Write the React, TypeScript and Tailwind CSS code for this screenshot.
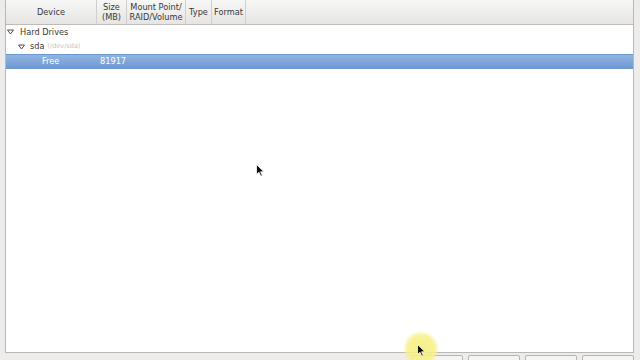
import React from "react";

const font = { fontFamily: '"DejaVu Sans", Verdana, sans-serif' };

function Arrow({ open = true }: { open?: boolean }) {
  return (
    <svg width="7" height="6" viewBox="0 0 7 6" className="shrink-0">
      {open ? (
        <path d="M0.5 1 L6.5 1 L3.5 5 Z" fill="none" stroke="#4a4a4a" strokeWidth="1" />
      ) : (
        <path d="M1 0.5 L5 3 L1 5.5 Z" fill="none" stroke="#4a4a4a" strokeWidth="1" />
      )}
    </svg>
  );
}

function Cursor({ className }: { className: string }) {
  return (
    <svg width="9" height="13" viewBox="0 0 9 13" className={className}>
      <path d="M0.5 0.5 L0.5 10.5 L3 8.3 L4.8 12.3 L6.3 11.6 L4.6 7.8 L8 7.8 Z" fill="#111" stroke="#fff" strokeWidth="0.8" />
    </svg>
  );
}

export default function App() {
  return (
    <div className="relative h-[360px] w-[640px] overflow-hidden bg-[#edeceb] text-[8.2px] text-[#383838]" style={font}>
      <div className="ml-[5px] flex h-[353px] w-[629px] flex-col border-b border-l border-r border-[#b9b8b6] bg-white">
        {/* header */}
        <div className="flex h-[25px] shrink-0 border-b border-[#bdbcba] bg-gradient-to-b from-[#f7f7f6] to-[#e6e5e4] leading-[10px]">
          <div className="flex w-[91px] items-center justify-center border-r border-[#d0cfcd]">Device</div>
          <div className="flex w-[30px] flex-col items-center justify-center border-r border-[#d0cfcd] text-center">
            <span>Size</span>
            <span>(MB)</span>
          </div>
          <div className="flex w-[59px] flex-col items-center justify-center border-r border-[#d0cfcd] text-center">
            <span>Mount Point/</span>
            <span>RAID/Volume</span>
          </div>
          <div className="flex w-[26px] items-center justify-center border-r border-[#d0cfcd]">Type</div>
          <div className="flex w-[34px] items-center justify-center border-r border-[#d0cfcd]">Format</div>
          <div className="flex-1" />
        </div>

        {/* rows */}
        <div className="flex h-[14px] items-center gap-[6px] pl-[1px]">
          <Arrow />
          <span>Hard Drives</span>
        </div>
        <div className="flex h-[15px] items-center gap-[5px] pl-[12px]">
          <Arrow />
          <span>sda</span>
          <span className="-ml-[2px] text-[6.5px] text-[#c4c4c4]">(/dev/sda)</span>
        </div>
        <div className="flex h-[15px] items-center border-y border-[#6d97cf] bg-gradient-to-b from-[#8fb5e3] to-[#7099d2] text-white">
          <span className="w-[94px] pl-[36px]">Free</span>
          <span>81917</span>
        </div>
        <div className="flex-1" />
      </div>

      {/* dialog buttons, cut off at the bottom */}
      <div className="mt-[2px] flex justify-end gap-[5px] pr-[6px]">
        <div className="h-[10px] w-[52px] rounded-t-[2px] border border-[#b5b4b2] bg-[#f4f4f3]" />
        <div className="h-[10px] w-[52px] rounded-t-[2px] border border-[#b5b4b2] bg-[#f4f4f3]" />
        <div className="h-[10px] w-[52px] rounded-t-[2px] border border-[#b5b4b2] bg-[#f4f4f3]" />
        <div className="h-[10px] w-[52px] rounded-t-[2px] border border-[#b5b4b2] bg-[#f4f4f3]" />
      </div>

      {/* pointer and click highlight */}
      <Cursor className="absolute left-[256px] top-[164px]" />
      <div className="absolute left-[403px] top-[331px] h-[36px] w-[36px] rounded-full bg-[radial-gradient(circle,rgba(245,238,120,0.95)_0%,rgba(247,241,140,0.85)_55%,rgba(250,246,170,0)_72%)]" />
      <Cursor className="absolute left-[417px] top-[344px]" />
    </div>
  );
}
